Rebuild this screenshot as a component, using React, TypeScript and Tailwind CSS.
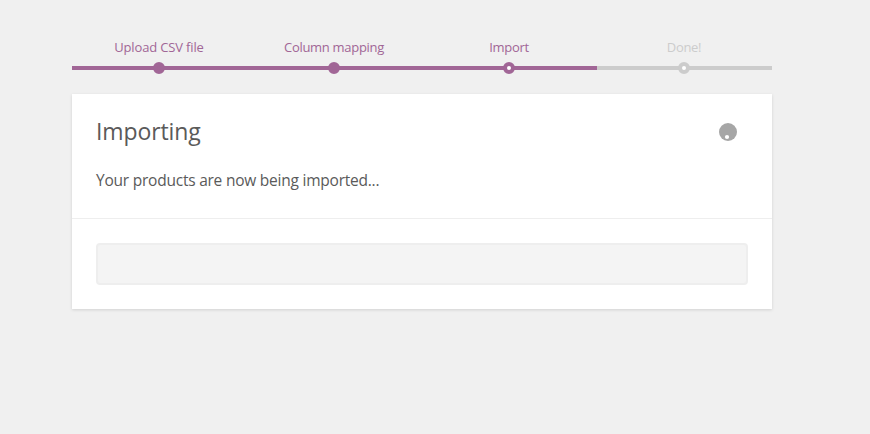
import clsx from 'clsx';

type StepState = 'done' | 'active' | 'pending';

const steps: { label: string; state: StepState; text: string }[] = [
  { label: 'Upload CSV file', state: 'done', text: 'tracking-[-0.15px]' },
  { label: 'Column mapping', state: 'done', text: 'tracking-[-0.3px]' },
  { label: 'Import', state: 'active', text: 'tracking-[-0.3px]' },
  { label: 'Done!', state: 'pending', text: 'tracking-[-0.3px]' },
];

function ProgressSteps() {
  return (
    <ol className="flex h-8">
      {steps.map(({ label, state, text }) => (
        <li
          key={label}
          className={clsx(
            'relative h-8 w-[175px] border-b-4 pr-px text-center text-[13px] leading-[18px]',
            state === 'pending' ? 'border-[#ccc] text-[#ccc]' : 'border-[#a16696] text-[#a16696]'
          )}
        >
          <span className={clsx('whitespace-nowrap', text)}>{label}</span>
          <span
            className={clsx(
              'absolute -bottom-2 left-[81px] size-3 rounded-full border-4',
              state === 'pending' ? 'border-[#ccc] bg-white' : 'border-[#a16696]',
              state === 'done' && 'bg-[#a16696]',
              state === 'active' && 'bg-white'
            )}
          />
        </li>
      ))}
    </ol>
  );
}

function Spinner() {
  return (
    <svg className="mt-[5px] mr-[11px] size-[18px]" viewBox="0 0 18 18" aria-hidden="true">
      <circle cx="9" cy="9" r="9" fill="#a6a6a6" />
      <circle cx="8" cy="14" r="2.1" fill="#fff" />
    </svg>
  );
}

export default function App() {
  return (
    <div className="min-h-screen bg-[#f0f0f0] pt-[38px] pl-[72px] font-['Open_Sans','Noto_Sans',sans-serif]">
      <div className="w-[700px]">
        <ProgressSteps />

        <div className="mt-6 bg-white shadow-[0_1px_3px_rgba(0,0,0,0.13)]">
          <header className="h-[125px] border-b border-[#eee] px-6 pt-6">
            <div className="flex h-7 justify-between">
              <h2 className="text-[23px] leading-[26px] font-normal text-[#5a5a5a] tracking-[-0.1px]">Importing</h2>
              <Spinner />
            </div>
            <p className="mt-[22px] text-[15.5px] leading-6 text-[#5a5a5a] tracking-[-0.23px]">
              Your products are now being imported...
            </p>
          </header>

          <section className="p-6">
            <div className="h-[42px] rounded-[4px] border-2 border-[#eee] bg-[#f4f4f4]" />
          </section>
        </div>
      </div>
    </div>
  );
}
